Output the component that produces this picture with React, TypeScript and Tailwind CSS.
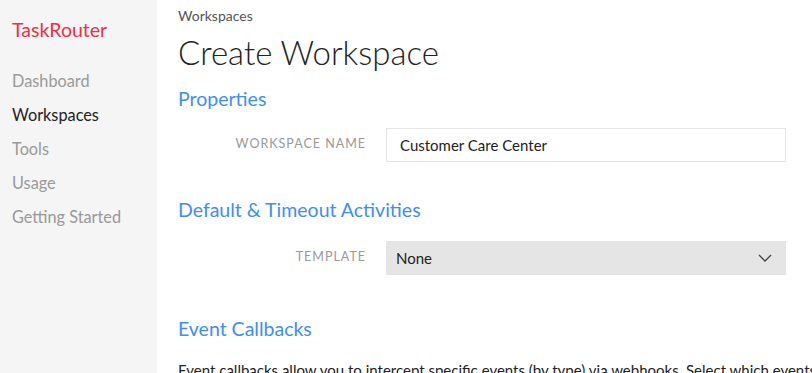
export default function App() {
  const nav = ['Dashboard', 'Workspaces', 'Tools', 'Usage', 'Getting Started'];
  return (
    <div className="flex h-[373px] w-[812px] overflow-hidden bg-white font-['Lato',sans-serif]">
      {/* Sidebar */}
      <aside className="w-[157px] shrink-0 bg-[#f5f5f5] pl-3 pt-[16px]">
        <div className="text-[19.5px] leading-[28px] text-[#f22f46]">TaskRouter</div>
        <nav className="mt-[20px] flex flex-col">
          {nav.map((item) => (
            <a
              key={item}
              className={`text-[16.3px] leading-[34px] ${
                item === 'Workspaces' ? 'text-[#222]' : 'text-[#999]'
              }`}
            >
              {item}
            </a>
          ))}
        </nav>
      </aside>

      {/* Main */}
      <main className="min-w-0 flex-1 pl-[21px] pr-[26px] pt-[6px]">
        <div className="text-[14px] leading-[20px] text-[#555]">Workspaces</div>
        <h1 className="mt-[6px] text-[33px] font-light leading-[40px] text-[#222]">Create Workspace</h1>

        <h2 className="mt-[13px] text-[19.5px] leading-[28px] text-[#3d8ff2]">Properties</h2>
        <div className="mt-[15px] flex items-center gap-5">
          <label className="mb-[3px] w-[188px] text-right text-[12.5px] uppercase leading-[16px] tracking-[0.08em] text-[#999]">
            Workspace Name
          </label>
          <div className="flex h-[34px] w-[400px] items-center border border-[#e5e5e5] px-[13px] text-[15px] text-[#222]">
            Customer Care Center
          </div>
        </div>

        <h2 className="mt-[34px] text-[19.5px] leading-[28px] text-[#3d8ff2]">Default &amp; Timeout Activities</h2>
        <div className="mt-[17px] flex items-center gap-5">
          <label className="mb-[3px] w-[188px] text-right text-[12.5px] uppercase leading-[16px] tracking-[0.08em] text-[#999]">
            Template
          </label>
          <div className="flex h-[34px] w-[400px] items-center justify-between bg-[#e5e5e5] pl-[10px] pr-[14px] text-[15px] text-[#222]">
            <span>None</span>
            <svg width="14" height="8" viewBox="0 0 14 8" fill="none">
              <path d="M1 1 L7 7 L13 1" stroke="#444" strokeWidth="1.3" />
            </svg>
          </div>
        </div>

        <h2 className="mt-[40px] text-[19.5px] leading-[28px] text-[#3d8ff2]">Event Callbacks</h2>
        <p className="mt-[16px] whitespace-nowrap text-[15px] leading-[22px] text-[#222]">
          Event callbacks allow you to intercept specific events (by type) via webhooks. Select which events you would like to receive.
        </p>
      </main>
    </div>
  );
}
